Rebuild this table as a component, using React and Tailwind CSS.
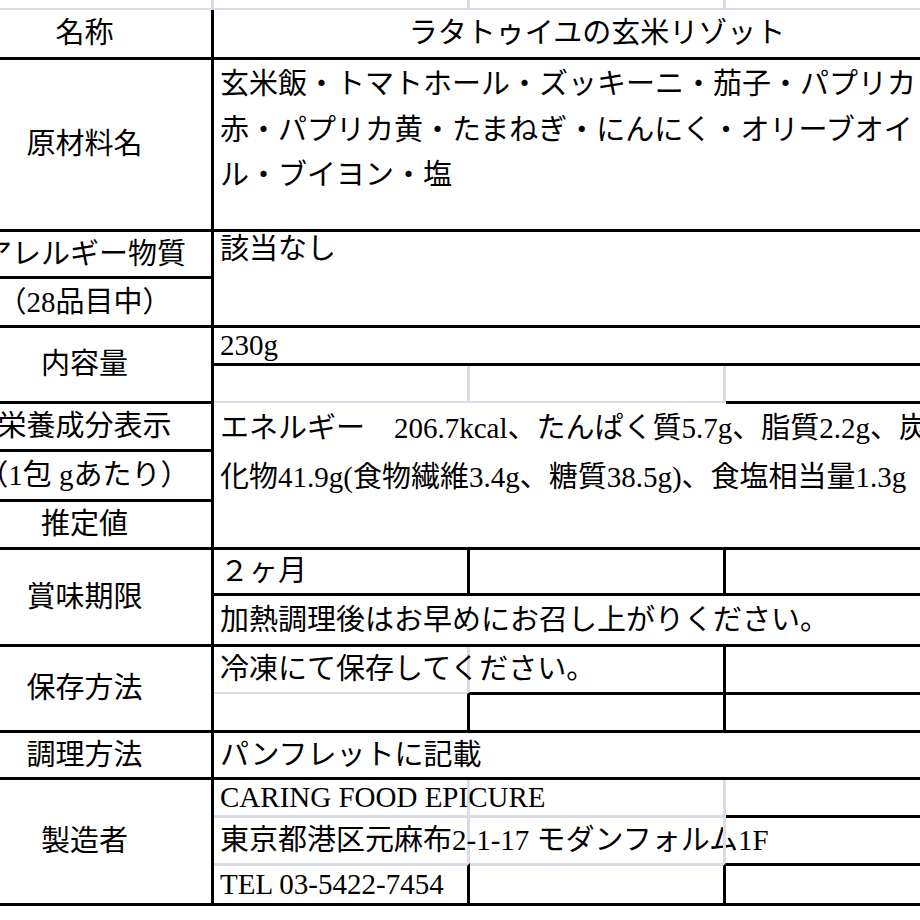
import React from "react";

// 食品表示ラベル（スプレッドシート風の表）
function Head({ children, className = "" }) {
    return (
        <div className={"w-[256px] shrink-0 border-r-[3px] border-black flex items-center justify-center whitespace-nowrap " + className}>
            {children}
        </div>
    );
}

function Cell({ children, className = "" }) {
    return (
        <div className={"flex items-center pl-[6px] whitespace-nowrap " + className}>
            {children}
        </div>
    );
}

export default function App() {
    return (
        <div className="w-[920px] h-[920px] overflow-hidden bg-white text-black text-[29px] leading-[1.2] font-['Liberation_Serif','Noto_Sans_CJK_JP',serif]">
            <div className="ml-[-42px] w-[1022px]">
                {/* 上の空行 */}
                <div className="flex h-[10px] border-b-2 border-[#dcdce8]">
                    <div className="w-[256px] shrink-0 border-r-[3px] border-[#dcdce8]" />
                    <div className="w-[256px] shrink-0 border-r-[3px] border-[#dcdce8]" />
                    <div className="w-[256px] shrink-0 border-r-[3px] border-[#dcdce8]" />
                    <div className="flex-1" />
                </div>

                {/* 名称 */}
                <div className="flex h-[47px]">
                    <Head>名称</Head>
                    <div className="flex-1 flex items-center justify-center whitespace-nowrap">
                        ラタトゥイユの玄米リゾット
                    </div>
                </div>

                {/* 原材料名 */}
                <div className="flex h-[172px] border-t-[3px] border-black">
                    <Head>原材料名</Head>
                    <div className="flex-1 pl-[6px] pt-[2px] leading-[45.5px] whitespace-nowrap">
                        <div>玄米飯・トマトホール・ズッキーニ・茄子・パプリカ</div>
                        <div>赤・パプリカ黄・たまねぎ・にんにく・オリーブオイ</div>
                        <div>ル・ブイヨン・塩</div>
                    </div>
                </div>

                {/* アレルギー物質 */}
                <div className="flex h-[96px] border-t-[3px] border-black">
                    <div className="w-[256px] shrink-0 border-r-[3px] border-black flex flex-col whitespace-nowrap">
                        <div className="h-[44px] flex items-center justify-center">アレルギー物質</div>
                        <div className="flex-1 border-t-[3px] border-black flex items-center justify-center">（28品目中）</div>
                    </div>
                    <div className="flex-1 pl-[6px] leading-[34px]">該当なし</div>
                </div>

                {/* 内容量 */}
                <div className="flex h-[76px] border-t-[3px] border-black">
                    <Head>内容量</Head>
                    <div className="flex-1 flex flex-col">
                        <Cell className="h-[35px]">230g</Cell>
                        <div className="flex-1 grid grid-cols-[256px_256px_1fr] border-t-[3px] border-black">
                            <div className="border-r-[3px] border-[#dcdce8]" />
                            <div className="border-r-[3px] border-[#dcdce8]" />
                            <div />
                        </div>
                    </div>
                </div>

                {/* 栄養成分表示 */}
                <div className="flex h-[146px]">
                    <div className="w-[256px] shrink-0 border-r-[3px] border-t-[3px] border-black flex flex-col whitespace-nowrap">
                        <div className="h-[45px] flex items-center justify-center">栄養成分表示</div>
                        <div className="h-[50px] border-t-[3px] border-black flex items-center justify-center">（1包 gあたり）</div>
                        <div className="flex-1 border-t-[3px] border-black flex items-center justify-center">推定値</div>
                    </div>
                    <div className="flex-1 flex flex-col">
                        <div className="h-[3px] grid grid-cols-[256px_256px_1fr]">
                            <div className="bg-[#dcdce8] mb-[1px]" />
                            <div className="bg-[#dcdce8] mb-[1px]" />
                            <div className="bg-black" />
                        </div>
                        <div className="pl-[6px] leading-[49px] whitespace-nowrap">
                            <div>エネルギー　206.7kcal、たんぱく質5.7g、脂質2.2g、炭水</div>
                            <div>化物41.9g(食物繊維3.4g、糖質38.5g)、食塩相当量1.3g</div>
                        </div>
                    </div>
                </div>

                {/* 賞味期限 */}
                <div className="flex h-[97px] border-t-[3px] border-black">
                    <Head>賞味期限</Head>
                    <div className="flex-1 flex flex-col">
                        <div className="h-[43px] grid grid-cols-[256px_256px_1fr]">
                            <Cell className="border-r-[3px] border-black">２ヶ月</Cell>
                            <div className="border-r-[3px] border-black" />
                            <div />
                        </div>
                        <Cell className="flex-1 border-t-[3px] border-black">加熱調理後はお早めにお召し上がりください。</Cell>
                    </div>
                </div>

                {/* 保存方法 */}
                <div className="flex h-[86px] border-t-[3px] border-black">
                    <Head>保存方法</Head>
                    <div className="flex-1 flex flex-col">
                        <div className="h-[45px] grid grid-cols-[256px_256px_1fr]">
                            <Cell className="border-r-[3px] border-[#dcdce8]">冷凍にて保存してください。</Cell>
                            <div className="border-r-[3px] border-black" />
                            <div />
                        </div>
                        <div className="flex-1 grid grid-cols-[256px_256px_1fr]">
                            <div className="border-t-2 border-t-[#dcdce8] border-r-[3px] border-r-black" />
                            <div className="border-t-[3px] border-r-[3px] border-black" />
                            <div className="border-t-[3px] border-black" />
                        </div>
                    </div>
                </div>

                {/* 調理方法 */}
                <div className="flex h-[47px] border-t-[3px] border-black">
                    <Head>調理方法</Head>
                    <Cell className="flex-1">パンフレットに記載</Cell>
                </div>

                {/* 製造者 */}
                <div className="flex h-[129px] border-y-[3px] border-black">
                    <Head>製造者</Head>
                    <div className="flex-1 flex flex-col">
                        <div className="h-[35px] grid grid-cols-[256px_256px_1fr]">
                            <Cell className="border-r-[3px] border-[#dcdce8]">CARING FOOD EPICURE</Cell>
                            <div className="border-r-[3px] border-[#dcdce8]" />
                            <div />
                        </div>
                        <div className="h-[48px] grid grid-cols-[256px_256px_1fr]">
                            <Cell className="border-t-[3px] border-r-[3px] border-[#dcdce8]">東京都港区元麻布2-1-17 モダンフォルム1F</Cell>
                            <div className="border-t-[3px] border-r-[3px] border-[#dcdce8]" />
                            <div className="border-t-[3px] border-black" />
                        </div>
                        <div className="flex-1 grid grid-cols-[256px_256px_1fr]">
                            <Cell className="border-t-[3px] border-t-[#dcdce8] border-r-[3px] border-r-black">TEL 03-5422-7454</Cell>
                            <div className="border-t-[3px] border-t-[#dcdce8] border-r-[3px] border-r-black" />
                            <div className="border-t-[3px] border-black" />
                        </div>
                    </div>
                </div>
            </div>
        </div>
    );
}
